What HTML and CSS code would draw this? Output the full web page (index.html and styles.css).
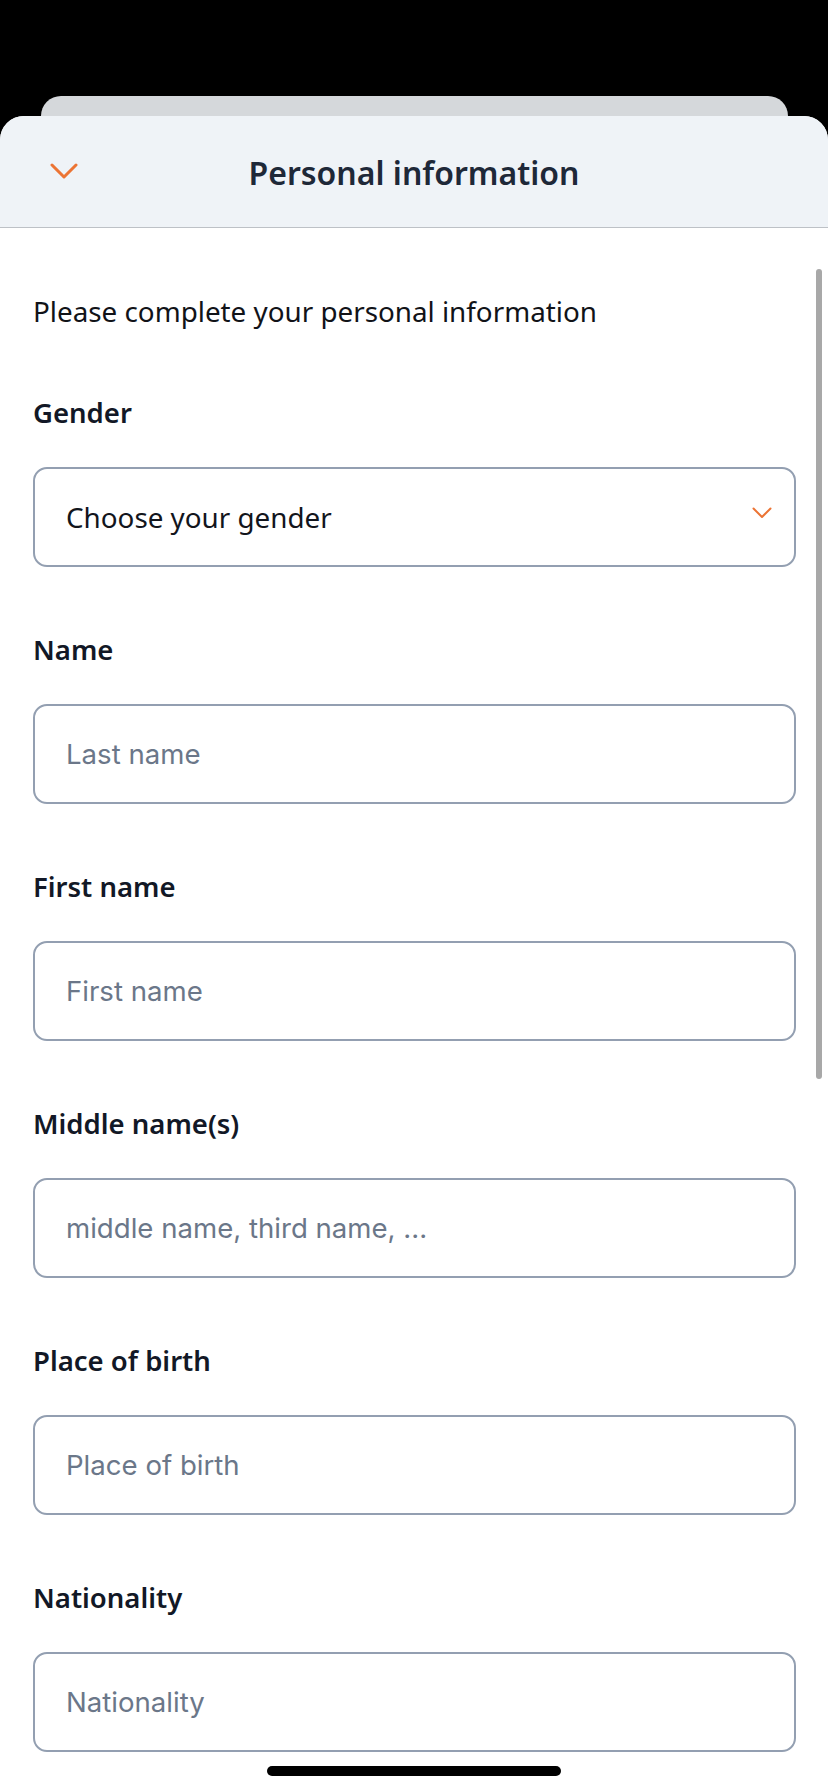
FILE: index.html
```html
<!DOCTYPE html>
<html lang="en">
<head>
<meta charset="utf-8">
<title>Personal information</title>
<link rel="stylesheet" href="styles.css">
</head>
<body>
<div class="stage">
  <div class="backcard"></div>
  <div class="sheet">
    <header class="header">
      <svg class="close-chev" width="28" height="17" viewBox="0 0 28 17" fill="none">
        <path d="M2 2 L14 14 L26 2" stroke="#ec7434" stroke-width="3" stroke-linecap="round" stroke-linejoin="round"/>
      </svg>
      <h1 class="title">Personal information</h1>
    </header>
    <main class="content">
      <p class="intro">Please complete your personal information</p>

      <div class="field">
        <div class="label">Gender</div>
        <div class="box select">
          <span class="value">Choose your gender</span>
          <svg class="sel-chev" width="20" height="12" viewBox="0 0 20 12" fill="none">
            <path d="M1.5 1.5 L10 10 L18.5 1.5" stroke="#ec7434" stroke-width="2" stroke-linecap="round" stroke-linejoin="round"/>
          </svg>
        </div>
      </div>

      <div class="field">
        <div class="label">Name</div>
        <div class="box"><span class="ph">Last name</span></div>
      </div>

      <div class="field">
        <div class="label">First name</div>
        <div class="box"><span class="ph">First name</span></div>
      </div>

      <div class="field">
        <div class="label">Middle name(s)</div>
        <div class="box"><span class="ph">middle name, third name, ...</span></div>
      </div>

      <div class="field">
        <div class="label">Place of birth</div>
        <div class="box"><span class="ph">Place of birth</span></div>
      </div>

      <div class="field">
        <div class="label">Nationality</div>
        <div class="box"><span class="ph">Nationality</span></div>
      </div>
    </main>
    <div class="scrollbar"></div>
    <div class="home-indicator"></div>
  </div>
</div>
</body>
</html>
```

FILE: styles.css
```css
* { box-sizing: border-box; }
html, body {
  margin: 0;
  padding: 0;
  background: #000;
  width: 828px;
  height: 1792px;
  overflow: hidden;
  font-family: "Noto Sans", "Open Sans", sans-serif;
}
.stage {
  padding-top: 96px;
  height: 1792px;
  display: flex;
  flex-direction: column;
}
.backcard {
  height: 20px;
  margin: 0 40px 0 41px;
  background: #d5d8db;
  border-radius: 22px 22px 0 0;
  flex: none;
}
.sheet {
  position: relative;
  flex: 1;
  background: #fff;
  border-radius: 24px 24px 0 0;
  overflow: hidden;
}
.header {
  height: 112px;
  background: #eff3f7;
  border-bottom: 1px solid #bdc1c6;
  display: flex;
  align-items: center;
  justify-content: center;
  position: relative;
}
.close-chev {
  position: absolute;
  left: 50px;
  top: 47px;
}
.title {
  margin: 0;
  font-size: 32px;
  font-weight: 600;
  color: #1e2838;
  line-height: 40px;
  padding-top: 2px;
}
.content {
  padding: 63px 32px 0 33px;
}
.intro {
  margin: 0 0 64px;
  font-size: 27.8px;
  line-height: 40px;
  color: #111318;
}
.field {
  display: flex;
  flex-direction: column;
  gap: 36px;
  margin-bottom: 65px;
}
.label {
  font-size: 27.5px;
  font-weight: 600;
  line-height: 36px;
  color: #121826;
}
.box {
  height: 100px;
  border: 2px solid #939fb1;
  border-radius: 14px;
  padding: 0 22px 0 31px;
  display: flex;
  align-items: center;
  justify-content: space-between;
}
.value {
  font-size: 27.8px;
  color: #12151c;
}
.ph {
  font-family: Inter, "Noto Sans", sans-serif;
  font-size: 27.6px;
  color: #6b7789;
}
.sel-chev {
  margin-top: -8px;
}
.scrollbar {
  position: absolute;
  right: 6px;
  top: 153px;
  width: 6px;
  height: 810px;
  border-radius: 3px;
  background: #a8a8a8;
}
.home-indicator {
  position: absolute;
  bottom: 16px;
  left: 50%;
  width: 294px;
  height: 10px;
  margin-left: -147px;
  border-radius: 5px;
  background: #000;
}
```
